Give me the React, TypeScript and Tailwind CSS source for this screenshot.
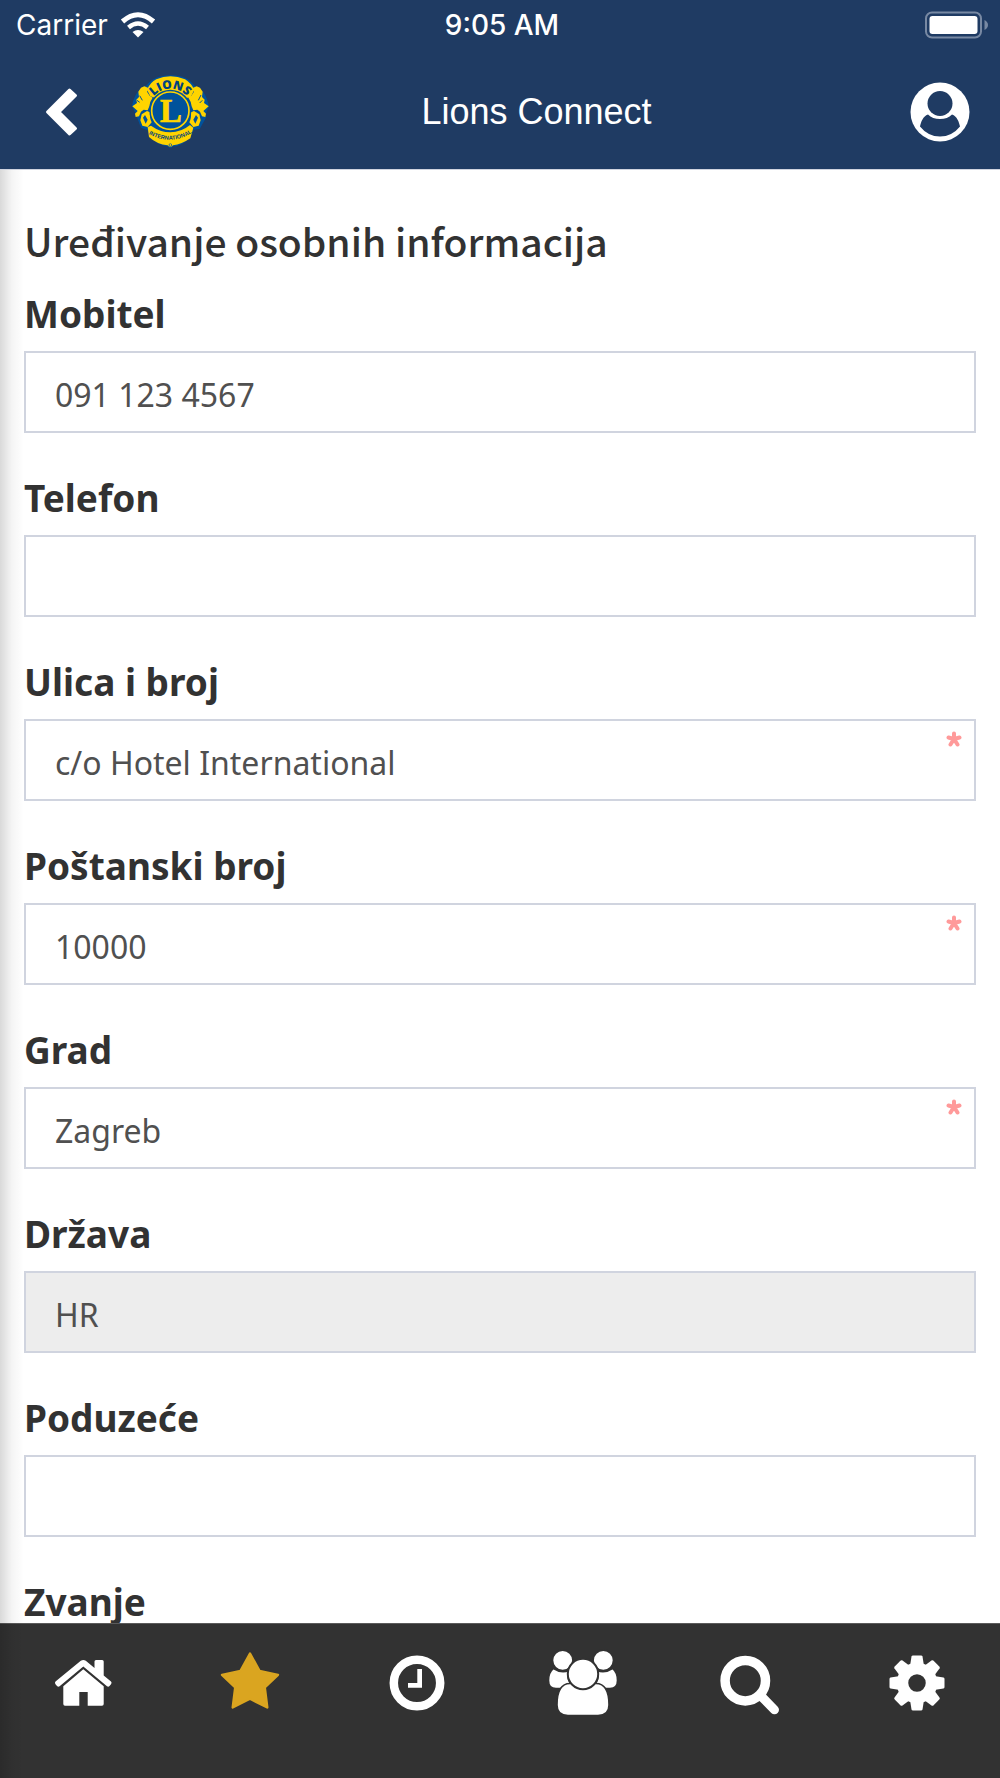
import { useState, type ReactNode } from "react";
import clsx from "clsx";

type Field = {
  id: string;
  label: string;
  value: string;
  required?: boolean;
  disabled?: boolean;
};

const fields: Field[] = [
  { id: "mobile", label: "Mobitel", value: "091 123 4567" },
  { id: "phone", label: "Telefon", value: "" },
  { id: "street", label: "Ulica i broj", value: "c/o Hotel International", required: true },
  { id: "zip", label: "Poštanski broj", value: "10000", required: true },
  { id: "city", label: "Grad", value: "Zagreb", required: true },
  { id: "country", label: "Država", value: "HR", disabled: true },
  { id: "company", label: "Poduzeće", value: "" },
  { id: "title", label: "Zvanje", value: "" },
];

function LionsLogo() {
  return (
    <svg viewBox="0 0 300 270" className="h-[90px] w-[100px]" role="img" aria-label="Lions International">
      <path
        d="M155 25C190 25 212 36 228 58C248 62 262 82 270 118L258 145L262 150L242 186L224 188C214 220 184 238 162 238Q154 248 146 238C122 236 92 220 86 190L66 182L50 140L39 116C46 84 60 62 82 56C98 35 122 25 155 25Z"
        fill="#00529b"
      />
      {/* lion heads, mirrored around the centre */}
      <g fill="#ffd400">
        <path id="lion" d="M76 58L90 64L84 74L92 86L101 92Q92 104 91 118L86 130L74 128L66 134L60 148L50 150L48 140L56 132L40 118L54 108L52 98L60 90L58 74L66 62ZM68 142L84 132L93 136Q92 156 98 166L86 180L70 176L64 160ZM78 144L72 152L80 170L86 158Z" fillRule="evenodd" />
        <use href="#lion" transform="matrix(-1 0 0 1 309 0)" />
      </g>
      <path d="M54 100L62 106M62 86L70 100M250 100L242 108M246 84L238 100" stroke="#00529b" strokeWidth="3" />
      <path d="M84 68Q94 46 112 37Q154 19 198 37Q216 48 226 68L214 92H200Q178 72 154 72Q130 72 108 92L94 88Z" fill="#ffd400" />
      <path d="M86 180L96 176Q124 196 154 196Q186 196 213 174L223 182L214 214Q188 232 162 235Q154 244 146 235Q114 232 90 210Z" fill="#ffd400" />
      <circle cx="154" cy="131" r="63" fill="#00529b" />
      <circle cx="154" cy="131" r="56" fill="none" stroke="#ffd400" strokeWidth="5" />
      <text x="156" y="164" textAnchor="middle" fontFamily="Liberation Serif, serif" fontWeight="700" fontSize="98" fill="#ffd400" stroke="#ffd400" strokeWidth="2">
        L
      </text>
      <path id="arcTop" d="M88 131A66 66 0 0 1 220 131" fill="none" />
      <path id="arcBottom" d="M82 197Q154 242 226 193" fill="none" />
      <text textAnchor="middle" fontFamily="Open Sans, sans-serif" fontWeight="800" fontSize="36" fill="#00427f">
        <textPath href="#arcTop" startOffset="50%">LIONS</textPath>
      </text>
      <text textAnchor="middle" fontFamily="Liberation Sans, sans-serif" fontWeight="700" fontSize="17" fill="#00427f">
        <textPath href="#arcBottom" startOffset="50%">INTERNATIONAL</textPath>
      </text>
      <circle cx="154" cy="234" r="4" fill="none" stroke="#00529b" strokeWidth="2" />
    </svg>
  );
}

function StatusBar() {
  return (
    <div className="grid h-[50px] grid-cols-[1fr_auto_1fr] items-center pr-3 pl-4 font-[Inter,sans-serif] text-[28px] leading-8 text-white">
      <div className="flex items-center gap-3">
        <span>Carrier</span>
        <svg viewBox="0 0 36 26" className="h-[26px] w-9" fill="none" stroke="#fff" strokeWidth="5">
          <path d="M2.500 9.500Q18-4 33.500 9.500" />
          <path d="M8.500 15.500Q18 7.500 27.500 15.500" strokeWidth="4.500" />
          <path d="M18 25.500L12.500 20Q18 16 23.500 20Z" fill="#fff" stroke="none" />
        </svg>
      </div>
      <span className="font-medium">9:05 AM</span>
      <svg viewBox="0 0 63 28" className="h-7 w-[63px] justify-self-end" fill="none">
        <rect x="1" y="1.500" width="55" height="25" rx="6" stroke="#7889a3" strokeWidth="2" />
        <rect x="4.500" y="5" width="48" height="18" rx="3" fill="#fff" />
        <path d="M59.500 9Q63 11 63 14T59.500 19Z" fill="#7889a3" />
      </svg>
    </div>
  );
}

function Header() {
  return (
    <header className="border-b border-[#d0d4df] bg-[#1f3b63]">
      <StatusBar />
      <div className="flex h-[119px] items-center pt-1 pr-[30px] pl-11">
        <button aria-label="Natrag" className="mr-[39px]">
          <svg viewBox="0 0 36 52" className="h-[52px] w-9" fill="#fff" stroke="#fff" strokeWidth="3" strokeLinejoin="round">
            <path d="M3.500 26L25.500 4L31.500 9.500L15 26L31.500 42.500L25.500 48Z" />
          </svg>
        </button>
        <LionsLogo />
        <h1 className="flex-1 text-center font-['Liberation_Sans',sans-serif] text-4xl text-white">Lions Connect</h1>
        <button aria-label="Profil" className="pl-14">
          <svg viewBox="0 0 60 60" className="size-[60px]">
            <circle cx="30" cy="30" r="29.500" fill="#fff" />
            <circle cx="30" cy="21.500" r="12.500" fill="#1f3b63" />
            <path d="M18 32.500Q22.500 37 30 37T42 32.500C47 34 49 40 50 44.500Q42 54.500 30 54.500T10 44.500C11 40 13 34 18 32.500Z" fill="#1f3b63" />
          </svg>
        </button>
      </div>
    </header>
  );
}

function FormField({ field }: { field: Field }) {
  const [value, setValue] = useState(field.value);

  return (
    <div className="mb-10">
      <label htmlFor={field.id} className="block pb-3 font-['Noto_Sans',sans-serif] text-[37px] leading-[50px] font-bold text-[#323232]">
        {field.label}
      </label>
      <div className="relative">
        <input
          id={field.id}
          value={value}
          required={field.required}
          disabled={field.disabled}
          onChange={(e) => setValue(e.target.value)}
          className={clsx(
            "block h-[82px] w-full border-2 border-[#d0d4df] px-[29px] pt-1 font-['Noto_Sans',sans-serif] text-[32px] text-[#505050] outline-none",
            field.disabled ? "bg-[#ededed]" : "bg-white"
          )}
        />
        {field.required && (
          <svg viewBox="0 0 16 16" className="absolute top-3 right-[14px] size-4" stroke="#ff9a9a" strokeWidth="4" strokeLinecap="round">
            <path d="M8 8V2.500M8 8L2.500 6.500M8 8L13.500 6.500M8 8L4.500 13.500M8 8L11.500 13.500" />
          </svg>
        )}
      </div>
    </div>
  );
}

const tabs: { name: string; active?: boolean; icon: ReactNode }[] = [
  {
    name: "Početna",
    icon: (
      <>
        <path d="M46.500 13.500Q46.500 12 48 12H54.200Q55.700 12 55.700 13.500V27.500L63 33.500Q64.200 34.800 63 36.200L61.500 38Q60.300 39.200 59 38.200L35.300 18.500L11.600 38.200Q10.300 39.200 9 38L7.500 36.200Q6.300 34.800 7.500 33.500L32.800 12.800Q35.300 11 37.800 12.800L46.500 20Z" />
        <path d="M35.300 21.300L55.700 38.300V56Q55.700 57.700 54 57.700H39.700V44H31.300V57.700H17Q15.300 57.700 15.300 56V38.300Z" />
      </>
    ),
  },
  {
    name: "Favoriti",
    active: true,
    icon: (
      <path d="M35 5.500L44.500 22.800L63 26.800L49.800 39.500L52.300 59.500L35 50.800L17.700 59.500L20.200 39.500L7 26.800L25.500 22.800Z" stroke="currentColor" strokeWidth="2.400" strokeLinejoin="round" />
    ),
  },
  {
    name: "Povijest",
    icon: (
      <>
        <circle cx="35" cy="35" r="23.200" fill="none" stroke="currentColor" strokeWidth="8.500" />
        <path d="M35.300 21H40V39.700H26V35H35.300Z" />
      </>
    ),
  },
  {
    name: "Članovi",
    icon: (
      // the dark outlines keep the overlapping figures apart
      <g stroke="#323232" strokeWidth="1.600">
        <path d="M5.500 20.500Q13 25.500 21 22.500Q18 31 24 37L20 40.500H8Q0.500 40.500 0.500 32.500T5.500 20.500Z" />
        <path d="M64.500 20.500Q57 25.500 49 22.500Q52 31 46 37L50 40.500H62Q69.500 40.500 69.500 32.500T64.500 20.500Z" />
        <circle cx="14.700" cy="12.300" r="10.200" />
        <circle cx="55.300" cy="12.300" r="10.200" />
        <path d="M22 35.500H48C58 35.500 61 46 61 57Q61 67.500 50 67.500H20Q9 67.500 9 57C9 46 12 35.500 22 35.500Z" />
        <circle cx="35" cy="26" r="15.200" strokeWidth="2" />
      </g>
    ),
  },
  {
    name: "Pretraga",
    icon: (
      <>
        <circle cx="30.300" cy="32.700" r="20.200" fill="none" stroke="currentColor" strokeWidth="9.500" />
        <path d="M46 48L59.500 61.800" stroke="currentColor" strokeWidth="9" strokeLinecap="round" />
      </>
    ),
  },
  {
    name: "Postavke",
    icon: (
      <>
        <circle cx="35" cy="35" r="14.500" fill="none" stroke="currentColor" strokeWidth="11.500" />
        {[0, 45, 90, 135, 180, 225, 270, 315].map((angle) => (
          <path key={angle} d="M28 18L29.500 8.500Q29.700 7.500 31 7.500H39Q40.300 7.500 40.500 8.500L42 18Z" transform={`rotate(${angle} 35 35)`} />
        ))}
      </>
    ),
  },
];

function TabBar() {
  return (
    <nav className="grid h-[155px] shrink-0 grid-cols-6 border-t border-[#5b5b5b] bg-[#323232] pt-6">
      {tabs.map((tab) => (
        <a key={tab.name} href="#" aria-label={tab.name} className={clsx("flex justify-center", tab.active ? "text-[#daa520]" : "text-white")}>
          <svg viewBox="0 0 70 70" className="size-[70px]" fill="currentColor">
            {tab.icon}
          </svg>
        </a>
      ))}
    </nav>
  );
}

export default function App() {
  return (
    <div className="flex h-screen flex-col bg-white">
      <Header />
      <div className="relative flex min-h-0 flex-1 flex-col">
        <main className="min-h-0 flex-1 overflow-y-auto px-6 pt-[42px] [scrollbar-width:none]">
          <h2 className="mb-[21px] font-['Noto_Sans_CJK_SC',sans-serif] text-[39px] leading-[56px] font-medium text-[#323232]">
            Uređivanje osobnih informacija
          </h2>
          <form>
            {fields.map((field) => (
              <FormField key={field.id} field={field} />
            ))}
          </form>
        </main>
        <TabBar />
        {/* page edge shadow */}
        <div className="pointer-events-none absolute inset-y-0 left-0 w-6 bg-linear-to-r from-black/15 via-black/4 to-transparent" />
      </div>
    </div>
  );
}
